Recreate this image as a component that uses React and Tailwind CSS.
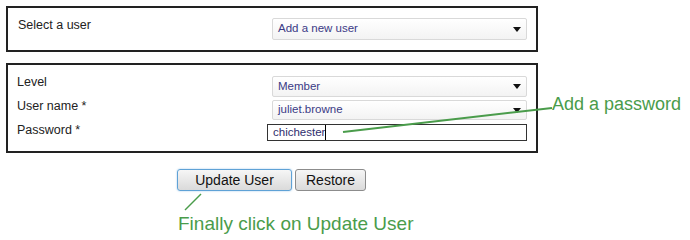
import React from 'react';

const font = { fontFamily: '"Liberation Sans", Arial, sans-serif' };

function Arrow() {
  return (
    <svg width="8" height="5" viewBox="0 0 8 5" className="shrink-0">
      <path d="M0 0 L8 0 L4 5 Z" fill="#111" />
    </svg>
  );
}

function Select({ value, height }) {
  return (
    <div
      className={`flex w-[255px] items-center justify-between rounded-[2px] border border-[#d9d9d9] bg-gradient-to-b from-white to-[#f3f3f3] pl-[5px] pr-[5px] text-[11.5px] text-[#3a3a86] ${height}`}
    >
      <span>{value}</span>
      <Arrow />
    </div>
  );
}

export default function App() {
  return (
    <div className="relative h-[234px] w-[690px] overflow-hidden bg-white text-[#222]" style={font}>
      <div className="pl-[6px] pt-[6px]">
        <div className="flex h-[46px] w-[532px] items-start border-2 border-[#222] pl-[10px] pt-[10px]">
          <div className="w-[254px] text-[12.5px] leading-[15px]">Select a user</div>
          <Select value="Add a new user" height="h-[22px]" />
        </div>

        <div className="mt-[11px] flex items-start">
          <div className="flex h-[90px] w-[532px] flex-col gap-[3px] border-2 border-[#222] pl-[9px] pt-[11px]">
            <div className="flex items-start">
              <div className="-mt-[1px] w-[255px] text-[12.5px] leading-[15px]">Level</div>
              <Select value="Member" height="h-[21px]" />
            </div>
            <div className="flex items-start">
              <div className="-mt-[1px] w-[255px] text-[12.5px] leading-[15px]">User name *</div>
              <Select value="juliet.browne" height="h-[20px]" />
            </div>
            <div className="mt-[1px] flex items-start">
              <div className="-mt-[1px] w-[250px] text-[12.5px] leading-[15px]">Password *</div>
              <div className="flex h-[17px] w-[260px] items-center border border-[#333] pl-[5px] text-[11.5px] text-[#2e2e6e]">
                <span>chichester</span>
                <span className="h-[15px] w-px bg-black" />
              </div>
            </div>
          </div>
          <div className="ml-[14px] mt-[31px] text-[18px] leading-[20px] text-[#4a9c4b]">Add a password</div>
        </div>

        <div className="mt-[16px] flex gap-[3px] pl-[171px] text-[14px]">
          <button className="h-[22px] w-[115px] rounded-[3px] border border-[#5fa2d6] bg-gradient-to-b from-[#f6f6f6] to-[#dadada] leading-[20px] text-[#111] shadow-[0_0_2px_#9cc7ea]">
            Update User
          </button>
          <button className="h-[22px] w-[71px] rounded-[3px] border border-[#8c8c8c] bg-gradient-to-b from-[#f6f6f6] to-[#dadada] leading-[20px] text-[#111]">
            Restore
          </button>
        </div>

        <div className="mt-[22px] pl-[172px] text-[19px] leading-[21px] text-[#4a9c4b]">Finally click on Update User</div>
      </div>

      <svg className="pointer-events-none absolute left-0 top-0" width="690" height="234">
        <line x1="343" y1="132" x2="552" y2="108" stroke="#4a9c4b" strokeWidth="2" />
        <line x1="201" y1="194" x2="185" y2="210" stroke="#4a9c4b" strokeWidth="1.5" />
      </svg>
    </div>
  );
}
